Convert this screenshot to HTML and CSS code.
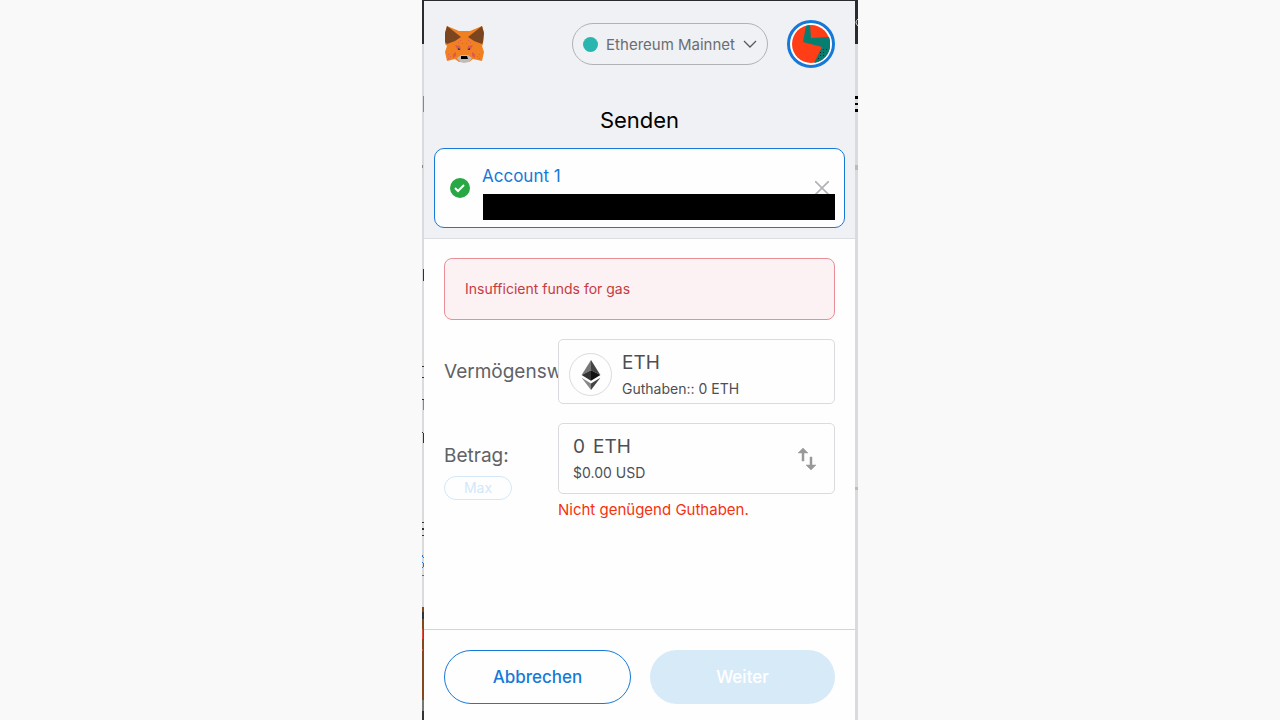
FILE: index.html
```html
<!DOCTYPE html>
<html lang="de">
<head>
    <meta charset="utf-8">
    <meta name="viewport" content="width=device-width, initial-scale=1">
    <title>Senden</title>
    <link rel="stylesheet" href="styles.css">
</head>
<body>
    <div class="screen">
        <!-- edges of the page behind the wallet -->
        <svg class="edge edge-left" width="2" height="720" aria-hidden="true">
            <rect width="2" height="44" fill="#2a2b2f"/>
            <path fill="#888" d="M1 96h1v16h-1zM0 165h1v3h-1zM1 400h1v10h-1z"/>
            <path fill="#333" d="M1 269h1v12h-1zM0 366h2v1h-2zM0 377h2v1h-2zM0 399h2v1h-2zM0 432h1v1h-1zM1 433h1v10h-1zM0 522h2v1h-2zM0 528h2v2h-2zM0 535h2v1h-2z"/>
            <path fill="#c9e0f2" d="M1 464h1v8h-1z"/>
            <path fill="#1d7bd8" d="M0 555h1v2h-1zM1 557h1v1h-1zM0 562h1v1h-1zM1 563h1v4h-1zM0 567h1v1h-1zM0 575h2v1h-2z"/>
            <rect y="607" width="2" height="93" fill="#84481f"/>
            <rect y="612" width="2" height="7" fill="#333"/>
            <rect y="629" width="1" height="10" fill="#e04a3b"/>
            <rect y="649" width="1" height="2" fill="#e04a3b"/>
            <rect y="700" width="2" height="20" fill="#777"/>
            <rect y="711" width="2" height="9" fill="#333"/>
        </svg>
        <svg class="edge edge-right" width="3" height="720" aria-hidden="true">
            <rect width="3" height="44" fill="#2a2b2f"/>
            <path d="M3 19q-4 3 0 7" fill="none" stroke="#ddd"/>
            <path d="M0 96h3v3h-3zM0 103h3v2h-3zM0 109h3v3h-3z"/>
            <path fill="#bbb" d="M0 165h3v5h-3zM0 487h3v3h-3z"/>
        </svg>

        <main class="wallet">
            <header class="top">
                <div class="app-bar">
                    <svg class="fox" viewBox="0 0 40 38" width="40" height="38" aria-hidden="true">
                        <path fill="#f08021" d="M3 1l12 5h11l12-5 2 7-1 11-1 2 2 6-2 9-9-2-4 3H15l-4-3-8 2-2-9 2-6-2-2V8z"/>
                        <path fill="#7b461f" d="M3 1l14 11-6 4-8 3-2-2V8zM38 1L24 12l6 4 8 3 1-2 1-9z"/>
                        <path fill="#dc5b50" d="M11 20l5 1 1 4-4-1zM29 20l-5 1-1 4 4-1zM9 29l3-2v4l-3 2zM31 29l-3-2v4l3 2z"/>
                        <path fill="#dc5b50" d="M14 17h1v1h-1zM16 15h1v1h-1zM18 18h1v1h-1zM22 18h1v1h-1zM24 15h1v1h-1zM26 17h1v1h-1zM4 29h1v1h-1zM6 31h1v1h-1zM4 33h1v1h-1zM35 29h1v1h-1zM33 31h1v1h-1zM35 33h1v1h-1z"/>
                        <path fill="#3d3944" d="M14 23l2 1v1h-2zM26 23l-2 1v1h2z"/>
                        <path fill="#c2bbb9" d="M13 33l4-3h7l4 3-3 4-5 1-4-1z"/>
                        <path d="M17 31h6l1 3h-7z"/>
                    </svg>
                    <button class="network" type="button">
                        <span class="network-dot"></span>
                        Ethereum Mainnet
                        <svg viewBox="0 0 14 8" width="14" height="8" aria-hidden="true"><path d="M1 1l6 6 6-6" fill="none" stroke="#555a60" stroke-width="1.3"/></svg>
                    </button>
                    <button class="avatar" type="button" aria-label="Account 1">
                        <svg viewBox="0 0 38 38" width="38" height="38" aria-hidden="true">
                            <circle cx="19" cy="19" r="19" fill="#ff3d17"/>
                            <path fill="#077e70" d="M14 1l-3 16 19 5-8 16a19 19 0 0 0 15-26l-18 1-1-13z"/>
                            <path fill="#123" d="M28 27h1v1h-1zM31 24h1v1h-1zM31 27h1v1h-1zM34 24h1v1h-1zM28 30h1v1h-1zM31 30h1v1h-1zM26 33h1v1h-1z"/>
                        </svg>
                    </button>
                </div>
                <h1>Senden</h1>
                <section class="recipient">
                    <svg class="check" viewBox="0 0 20 20" width="20" height="20" aria-hidden="true"><circle cx="10" cy="10" r="10" fill="#28a745"/><path d="M5 10l3 3 6-6" fill="none" stroke="#fff" stroke-width="2"/></svg>
                    <div class="recipient-text">
                        <div class="recipient-name">Account 1</div>
                        <div class="address"></div>
                    </div>
                    <button class="clear" type="button" aria-label="Entfernen">
                        <svg viewBox="0 0 14 14" width="14" height="14" aria-hidden="true"><path d="M0 0l14 14M14 0L0 14" stroke="#aeb1b5" stroke-width="1.6"/></svg>
                    </button>
                </section>
            </header>

            <form class="send-form" id="send-form">
                <div class="alert" role="alert">Insufficient funds for gas</div>
                <div class="row">
                    <div class="label">Vermögensw</div>
                    <button class="field asset" type="button">
                        <span class="coin">
                            <svg viewBox="0 0 20 32" width="20" height="30" aria-hidden="true">
                                <path fill="#777" d="M10 0L0 16l10-5z"/>
                                <path fill="#444" d="M10 0l10 16-10-5z"/>
                                <path fill="#333" d="M10 11L0 16l10 6z"/>
                                <path fill="#111" d="M10 11l10 5-10 6z"/>
                                <path fill="#888" d="M0 19l10 6v7z"/>
                                <path fill="#444" d="M20 19l-10 6v7z"/>
                            </svg>
                        </span>
                        <span class="lines">
                            <span class="big">ETH</span>
                            <span class="small">Guthaben:: 0 ETH</span>
                        </span>
                    </button>
                </div>
                <div class="row">
                    <div class="amount-label">
                        <label class="label" for="amount">Betrag:</label>
                        <button class="max" type="button" disabled>Max</button>
                    </div>
                    <div>
                        <div class="field amount">
                            <div class="lines">
                                <div class="big"><input id="amount" type="text" value="0">ETH</div>
                                <div class="small">$0.00 USD</div>
                            </div>
                            <button class="swap" type="button" aria-label="Währung wechseln">
                                <svg viewBox="0 0 18 22" width="18" height="22" aria-hidden="true"><path fill="#999" d="M5 0l5 5H6v8H4V5H0zM13 22l-5-5h4V9h2v8h4z" stroke="#999" stroke-width=".5"/></svg>
                            </button>
                        </div>
                        <div class="error">Nicht genügend Guthaben.</div>
                    </div>
                </div>
            </form>

            <footer class="actions">
                <button class="btn btn-cancel" type="button">Abbrechen</button>
                <button class="btn btn-next" type="submit" form="send-form" disabled>Weiter</button>
            </footer>
        </main>
    </div>
</body>
</html>
```
FILE: styles.css
```css
* {
    box-sizing: border-box;
}

body {
    margin: 0;
    background-color: #f9f9f9;
    font-family: Inter, "Liberation Sans", sans-serif;
    color: #4d4f52;
}

button,
input {
    font: inherit;
    color: inherit;
    background: none;
    border: none;
    padding: 0;
    margin: 0;
}

svg {
    display: block;
    flex-shrink: 0;
}

h1 {
    margin: 0;
    font-size: 22px;
    line-height: 28px;
    font-weight: 400;
    color: black;
    text-align: center;
}

.screen {
    position: relative;
    display: flex;
    width: 100%;
    max-width: 436px;
    min-height: 100vh;
    margin: 0 auto;
    padding: 0 3px 0 2px;
    background-color: #d9dbdf;
    border-top: 1px solid #2a2b2f;
    overflow: hidden;
}

.edge {
    position: absolute;
    top: -1px;
}

.edge-left {
    left: 0;
}

.edge-right {
    right: 0;
}

.wallet {
    flex: 1;
    display: flex;
    flex-direction: column;
    min-width: 0;
    background-color: #fefefe;
}

.top {
    padding: 19px 10px 10px;
    background-color: #f0f1f4;
    border-bottom: 1px solid #dcdde1;
}

.app-bar {
    display: flex;
    align-items: center;
    padding: 0 10px;
    margin-bottom: 38px;
}

.fox {
    margin-right: auto;
}

.network {
    display: flex;
    align-items: center;
    gap: 8px;
    height: 42px;
    padding: 0 10px;
    margin-right: 19px;
    border: 1px solid #b0b2b6;
    border-radius: 21px;
    font-size: 15px;
    color: #6a6d72;
}

.network-dot {
    width: 15px;
    height: 15px;
    border-radius: 50%;
    background-color: #29b6af;
}

.avatar {
    display: flex;
    align-items: center;
    justify-content: center;
    width: 48px;
    height: 48px;
    border: 3px solid #1679d8;
    border-radius: 50%;
    background-color: white;
}

.recipient {
    display: flex;
    align-items: center;
    height: 80px;
    margin-top: 14px;
    padding: 0 15px;
    border: 1px solid #1679d8;
    border-radius: 10px;
    background-color: #fefefe;
}

.recipient-text {
    flex: 1;
    margin-left: 12px;
    padding-top: 8px;
    z-index: 1;
}

.recipient-name {
    font-size: 17px;
    line-height: 24px;
    color: #1679d8;
}

.clear {
    display: block;
}

/* blacked out address, covers part of the clear button */
.address {
    height: 26px;
    margin: 6px -20px 0 1px;
    background-color: black;
}

.send-form {
    display: flex;
    flex-direction: column;
    gap: 19px;
    padding: 19px 20px;
}

.alert {
    padding: 20px;
    border: 1px solid #e88f97;
    border-radius: 8px;
    background-color: #fcf1f3;
    font-size: 14px;
    line-height: 20px;
    color: #c53b42;
}

.row {
    display: grid;
    grid-template-columns: 114px 1fr;
}

.label {
    padding-top: 21px;
    font-size: 19px;
    line-height: 24px;
    color: #606266;
}

.amount-label {
    display: flex;
    flex-direction: column;
    align-items: flex-start;
    gap: 8px;
}

.max {
    width: 68px;
    height: 24px;
    border: 1px solid #d2e8f8;
    border-radius: 12px;
    font-size: 14px;
    line-height: 20px;
    color: #d2e8f8;
}

.field {
    display: flex;
    align-items: center;
    border: 1px solid #d9dbde;
    border-radius: 5px;
    background-color: #fefefe;
    text-align: left;
}

.asset {
    height: 65px;
    padding: 6px 10px 0;
    gap: 10px;
}

.amount {
    height: 71px;
    padding: 0 18px 0 14px;
    justify-content: space-between;
}

.coin {
    display: flex;
    align-items: center;
    justify-content: center;
    width: 43px;
    height: 43px;
    border: 1px solid #d9dbde;
    border-radius: 50%;
}

.lines {
    display: flex;
    flex-direction: column;
}

.big {
    display: flex;
    gap: 7px;
    font-size: 19px;
    line-height: 28px;
}

.big input {
    width: 13px;
}

.small {
    font-size: 14px;
    line-height: 24px;
}

.error {
    margin-top: 6px;
    font-size: 15px;
    line-height: 20px;
    color: #f5320f;
}

.actions {
    display: flex;
    gap: 19px;
    margin-top: auto;
    padding: 20px 20px 16px;
    border-top: 1px solid #d2d4d6;
}

.btn {
    flex: 1;
    height: 54px;
    border-radius: 27px;
    font-size: 17px;
    font-weight: 500;
}

.btn-cancel {
    border: 1px solid #1679d8;
    color: #1679d8;
}

.btn-next {
    background-color: #d7eaf8;
    color: white;
}
```
